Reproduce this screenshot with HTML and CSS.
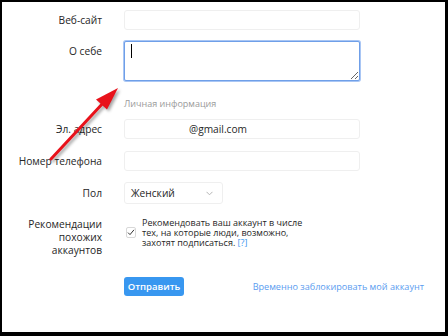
FILE: index.html
```html
<!DOCTYPE html>
<html lang="ru">
<head>
<meta charset="utf-8">
<link rel="stylesheet" href="styles.css">
</head>
<body>
<div class="frame">
  <div class="form">
    <div class="row r1">
      <div class="label">Веб-сайт</div>
      <div class="input"></div>
    </div>
    <div class="row r2">
      <div class="label top">О себе</div>
      <div class="ta-wrap">
        <textarea class="textarea"></textarea>
        <span class="caret"></span>
      </div>
    </div>
    <div class="row heading">
      <div></div>
      <div class="section">Личная информация</div>
    </div>
    <div class="row r3">
      <div class="label">Эл. адрес</div>
      <div class="input email">@gmail.com</div>
    </div>
    <div class="row r4">
      <div class="label">Номер телефона</div>
      <div class="input"></div>
    </div>
    <div class="row r5">
      <div class="label">Пол</div>
      <div class="select">
        <span>Женский</span>
        <svg class="chev" width="7" height="5" viewBox="0 0 7 5"><path d="M0.5 0.8 L3.5 3.8 L6.5 0.8" fill="none" stroke="#b5b5b5" stroke-width="1"/></svg>
      </div>
    </div>
    <div class="row r6">
      <div class="label multi">Рекомендации<br>похожих<br>аккаунтов</div>
      <div class="check-wrap">
        <span class="checkbox">
          <svg width="8" height="7" viewBox="0 0 8 7"><path d="M1 3.6 L3 5.6 L7 0.8" fill="none" stroke="#333" stroke-width="1"/></svg>
        </span>
        <span class="check-text">Рекомендовать ваш аккаунт в числе тех, на которые люди, возможно, захотят подписаться. <a class="help">[?]</a></span>
      </div>
    </div>
    <div class="submit-row">
      <span class="btn">Отправить</span>
      <a class="link">Временно заблокировать мой аккаунт</a>
    </div>
  </div>
  <svg class="arrow" width="448" height="336" viewBox="0 0 448 336">
    <line x1="51" y1="159" x2="104" y2="102" stroke="#e8121b" stroke-width="3" stroke-linecap="round"/>
    <polygon points="118,88 96,99.5 107,109.5" fill="#e8121b"/>
  </svg>
</div>
</body>
</html>
```
FILE: styles.css
```css
* { box-sizing: border-box; }
html, body { margin: 0; padding: 0; }
body {
  width: 448px;
  height: 336px;
  background: #000;
  font-family: "Open Sans", "Noto Sans", sans-serif;
  color: #262626;
  overflow: hidden;
}
.frame {
  position: relative;
  width: 448px;
  height: 336px;
  background: #fff;
  border-style: solid;
  border-color: #000;
  border-width: 2px 3px 4px 2px;
}
.form {
  display: flex;
  flex-direction: column;
  padding-top: 8px;
}
.row {
  display: grid;
  grid-template-columns: 100px 236px;
  column-gap: 22px;
  align-items: center;
}
.label {
  text-align: right;
  font-size: 10.2px;
  line-height: 14px;
  white-space: nowrap;
}
.label.top { align-self: start; padding-top: 3px; }
.input {
  height: 20px;
  border: 1px solid #efefef;
  border-radius: 3px;
  background: #fff;
  font-size: 10.2px;
  line-height: 18px;
  padding-left: 8px;
}
.input.email { padding-left: 64px; }
.r2 { margin-top: 11px; }
.ta-wrap { position: relative; height: 40px; }
.textarea {
  display: block;
  width: 236px;
  height: 40px;
  margin: 0;
  border: 1px solid #6f9fe8;
  box-shadow: 0 0 0 1px #a9c6f4;
  border-radius: 2px;
  resize: both;
  background: #fff;
  outline: none;
}
.caret {
  position: absolute;
  left: 7px;
  top: 3px;
  width: 1px;
  height: 14px;
  background: #000;
}
.heading { margin-top: 16px; }
.section {
  font-size: 9px;
  line-height: 14px;
  color: #9a9a9a;
}
.r3 { margin-top: 8px; }
.r4 { margin-top: 12px; }
.r5 { margin-top: 11px; }
.select {
  width: 99px;
  height: 22px;
  border: 1px solid #efefef;
  border-radius: 3px;
  display: flex;
  align-items: center;
  justify-content: space-between;
  padding: 0 9px 0 6px;
  font-size: 10.2px;
}
.r6 { margin-top: 14px; align-items: start; }
.label.multi { line-height: 13px; }
.check-wrap {
  display: flex;
  align-items: flex-start;
}
.checkbox {
  flex: none;
  width: 10px;
  height: 11px;
  margin: 9px 6px 0 2px;
  border: 1px solid #d8d8d8;
  border-radius: 2px;
  display: flex;
  align-items: center;
  justify-content: center;
}
.check-text {
  font-size: 9px;
  line-height: 10px;
  width: 172px;
}
.help { color: #3897f0; }
.submit-row {
  display: flex;
  align-items: center;
  margin-top: 20px;
  padding-left: 122px;
  padding-right: 21px;
}
.btn {
  width: 60px;
  height: 19px;
  background: #3897f0;
  border-radius: 3px;
  color: #fff;
  font-weight: 600;
  font-size: 9.5px;
  line-height: 19px;
  text-align: center;
}
.link {
  margin-left: auto;
  color: #5a9cf0;
  font-size: 9.1px;
  line-height: 14px;
}
.arrow {
  position: absolute;
  left: -2px;
  top: -2px;
  pointer-events: none;
  filter: drop-shadow(2px 2px 1.5px rgba(0,0,0,0.35));
}
```
